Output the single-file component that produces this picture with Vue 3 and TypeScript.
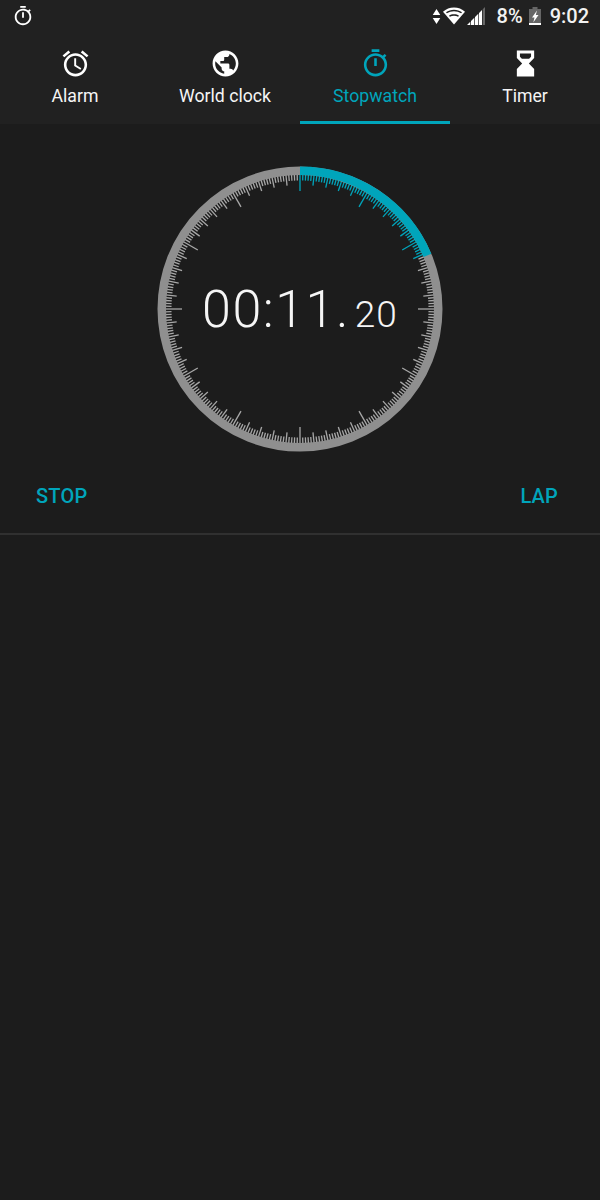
<template>
  <div class="screen">
    <header class="header">
      <div class="status">
        <svg class="status__timer" viewBox="0 0 24 24"><path :d="icons.timer" /></svg>
        <div class="status__right">
          <svg class="status__arrows" viewBox="0 0 9 18"><path d="M4.500 1 8.500 7.500H.5zM4.500 17 .5 10.500H8.500z" /></svg>
          <svg class="status__wifi" viewBox="0 0 22 18">
            <path d="M11 17.500 0 4.700C3 2 6.800.5 11 .5s8 1.500 11 4.200z" />
            <path class="cut" d="M3 5.200C5.200 3.700 8 2.800 11 2.800s5.800.9 8 2.400l-.9 1.100C16 4.900 13.600 4.200 11 4.200s-5 .7-7.100 2.100zM6 8.700c1.400-.9 3.100-1.400 5-1.400s3.600.5 5 1.400l-.9 1.100C13.900 9.100 12.500 8.700 11 8.700s-2.900.4-4.100 1.100z" />
          </svg>
          <svg class="status__signal" viewBox="0 0 18 18">
            <path d="M0 18 3.300 14.700V18zM4 18V14L7.300 10.700V18zM8 18V10L11.300 6.700V18zM12 18V6L15 3V18z" />
            <path class="dim" d="M15.700 18V2.300L18 0V18z" />
          </svg>
          <span class="status__percent">8%</span>
          <svg class="status__battery" viewBox="0 0 12 18">
            <path class="dim" d="M3.500 0h5v2H12v16H0V2h3.500z" />
            <path d="M0 16h12v2H0z" />
            <path d="M8 3.500 3 10.500h2.500L4.300 15.500 9.500 8H6.800z" />
          </svg>
          <span class="status__time">9:02</span>
        </div>
      </div>
      <nav class="tabs">
        <div
          v-for="tab in tabs"
          :key="tab.label"
          class="tab"
          :class="{ 'tab--active': tab.active }"
        >
          <svg class="tab__icon" viewBox="0 0 24 24" fill-rule="evenodd"><path :d="tab.icon" /></svg>
          <span class="tab__label">{{ tab.label }}</span>
        </div>
      </nav>
    </header>

    <main class="main">
      <div class="dial">
        <svg class="dial__face" viewBox="0 0 290 290">
          <line
            v-for="tick in ticks"
            :key="tick.id"
            class="dial__tick"
            :class="{ 'dial__tick--on': tick.on }"
            :x1="tick.x1"
            :y1="tick.y1"
            :x2="tick.x2"
            :y2="tick.y2"
          />
          <circle class="dial__ring" cx="145" cy="145" :r="RING_RADIUS" />
          <path class="dial__progress" :d="progressPath" />
        </svg>
        <div class="dial__time">
          <span class="dial__main">00:11.</span><span class="dial__hundredths">20</span>
        </div>
      </div>

      <div class="actions">
        <span class="actions__btn">STOP</span>
        <span class="actions__btn">LAP</span>
      </div>
      <div class="divider"></div>
    </main>
  </div>
</template>

<script setup lang="ts">
const icons = {
  alarm: 'M22 5.72l-4.6-3.86-1.29 1.53 4.6 3.86L22 5.72zM7.88 3.39L6.6 1.86 2 5.71l1.29 1.53 4.59-3.85zM12.5 8H11v6l4.75 2.85.75-1.23-4-2.37V8zM12 4c-4.97 0-9 4.03-9 9s4.02 9 9 9c4.97 0 9-4.03 9-9s-4.03-9-9-9zm0 16c-3.87 0-7-3.13-7-7s3.13-7 7-7 7 3.13 7 7-3.13 7-7 7z',
  globe: 'M12 2C6.48 2 2 6.48 2 12s4.48 10 10 10 10-4.48 10-10S17.52 2 12 2zm-1 17.93c-3.95-.49-7-3.85-7-7.93 0-.62.08-1.21.21-1.79L9 15v1c0 1.1.9 2 2 2v1.93zm6.9-2.54c-.26-.81-1-1.39-1.9-1.39h-1v-3c0-.55-.45-1-1-1H8v-2h2c.55 0 1-.45 1-1V7h2c1.1 0 2-.9 2-2v-.41c2.93 1.19 5 4.06 5 7.41 0 2.08-.8 3.97-2.1 5.39z',
  timer: 'M15 1H9v2h6V1zm-4 13h2V8h-2v6zm8.03-6.61l1.42-1.42c-.43-.51-.9-.99-1.41-1.41l-1.42 1.42C16.07 4.74 14.12 4 12 4c-4.97 0-9 4.03-9 9s4.02 9 9 9 9-4.03 9-9c0-2.12-.74-4.07-1.97-5.61zM12 20c-3.87 0-7-3.13-7-7s3.13-7 7-7 7 3.13 7 7-3.13 7-7 7z',
  hourglass: 'M5.300 2H18.700V7.800L14.600 12 18.700 16.200V22H5.300V16.200L9.400 12 5.300 7.800zM7.700 4.200V6.800L9.200 8.300H14.800L16.300 6.800V4.200z',
};

const tabs = [
  { label: 'Alarm', icon: icons.alarm, active: false },
  { label: 'World clock', icon: icons.globe, active: false },
  { label: 'Stopwatch', icon: icons.timer, active: true },
  { label: 'Timer', icon: icons.hourglass, active: false },
];

const CENTER = 145;
const RING_RADIUS = 138.25;
const PROGRESS_DEG = (11.2 / 60) * 360;

const polar = (radius: number, deg: number) => {
  const rad = (deg * Math.PI) / 180;
  return {
    x: +(CENTER + radius * Math.sin(rad)).toFixed(2),
    y: +(CENTER - radius * Math.cos(rad)).toFixed(2),
  };
};

// 300 ticks: medium every 5th, long every 25th
const ticks = Array.from({ length: 300 }, (_, id) => {
  const deg = id * 1.2;
  const inner = id % 25 === 0 ? 118 : id % 5 === 0 ? 124 : 128.5;
  const from = polar(135, deg);
  const to = polar(inner, deg);
  return {
    id,
    x1: from.x,
    y1: from.y,
    x2: to.x,
    y2: to.y,
    on: deg <= PROGRESS_DEG,
  };
});

const arcEnd = polar(RING_RADIUS, PROGRESS_DEG);
const progressPath = `M ${CENTER} ${CENTER - RING_RADIUS} A ${RING_RADIUS} ${RING_RADIUS} 0 0 1 ${arcEnd.x} ${arcEnd.y}`;
</script>

<style>
html,
body {
  background: #1c1c1c;
}
</style>

<style scoped>
.screen {
  display: flex;
  flex-direction: column;
  width: 600px;
  height: 1200px;
  overflow: hidden;
  background: #1c1c1c;
  color: #fff;
  font-family: Roboto, "Liberation Sans", sans-serif;
}

.header {
  background: #212121;
}

.status {
  display: flex;
  align-items: center;
  justify-content: space-between;
  height: 32px;
  padding: 0 11px 0 12px;
}

.status svg {
  fill: #fff;
}

.status__timer {
  width: 22px;
  height: 22px;
  margin-top: -1px;
}

.status__right {
  display: flex;
  align-items: center;
}

.status__arrows {
  width: 9px;
  height: 17px;
  margin-right: 2px;
}

.status__wifi {
  width: 22px;
  height: 18px;
  margin-right: 2px;
}

.status__wifi .cut {
  fill: #212121;
}

.status__signal {
  width: 18px;
  height: 18px;
  margin-right: 12px;
}

.status .dim {
  fill: #666;
}

.status__percent {
  margin-right: 6px;
  font-size: 20px;
  font-weight: 500;
  color: #f2f2f2;
}

.status__battery {
  width: 12px;
  height: 18px;
  margin-right: 9px;
}

.status__time {
  font-size: 20px;
  font-weight: 500;
  color: #f2f2f2;
}

.tabs {
  display: grid;
  grid-template-columns: repeat(4, 1fr);
  height: 92px;
}

.tab {
  display: flex;
  flex-direction: column;
  align-items: center;
  padding-top: 16px;
  border-bottom: 3px solid transparent;
  fill: #fff;
  color: #f5f5f5;
}

.tab--active {
  border-bottom-color: #00a5bb;
  fill: #00a5bb;
  color: #00a5bb;
}

.tab__icon {
  width: 31px;
  height: 31px;
}

.tab__label {
  margin-top: 5px;
  font-size: 17.7px;
  line-height: 24px;
}

.main {
  display: flex;
  flex-direction: column;
}

.dial {
  display: grid;
  place-items: center;
  padding-top: 40px;
}

.dial__face,
.dial__time {
  grid-area: 1 / 1;
}

.dial__face {
  width: 290px;
  height: 290px;
}

.dial__tick {
  stroke: #a8a8a8;
  stroke-width: 1.3;
}

.dial__tick--on {
  stroke: #00a5bb;
}

.dial__ring {
  fill: none;
  stroke: #8f8f8f;
  stroke-width: 8.5;
}

.dial__progress {
  fill: none;
  stroke: #00a5bb;
  stroke-width: 8.5;
}

.dial__time {
  display: flex;
  align-items: baseline;
  color: #f5f5f5;
  font-weight: 300;
  white-space: nowrap;
}

.dial__main {
  font-size: 52px;
  letter-spacing: 1.5px;
}

.dial__hundredths {
  margin-left: 5px;
  font-size: 37px;
  letter-spacing: 1px;
}

.actions {
  display: flex;
  justify-content: space-between;
  padding: 30px 42px 0 36px;
}

.actions__btn {
  font-size: 20px;
  font-weight: 500;
  line-height: 24px;
  letter-spacing: 0.2px;
  color: #00a5bb;
}

.divider {
  height: 2px;
  margin-top: 25px;
  background: #303030;
}
</style>
